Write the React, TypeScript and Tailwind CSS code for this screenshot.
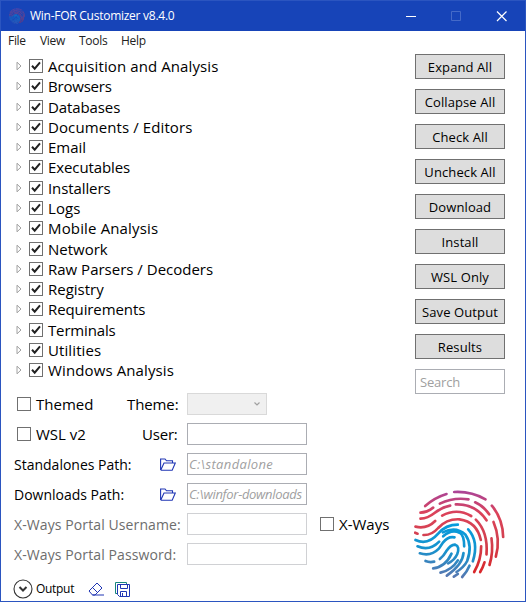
import React from "react";

const tree: [string, string][] = [
  ["Acquisition and Analysis", "tracking-[0.1px]"],
  ["Browsers", "tracking-[-0.2px]"],
  ["Databases", "tracking-[-0.1px]"],
  ["Documents / Editors", "tracking-[0.1px]"],
  ["Email", "tracking-[0px]"],
  ["Executables", "tracking-[-0.1px]"],
  ["Installers", "tracking-[-0.1px]"],
  ["Logs", "tracking-[0.1px]"],
  ["Mobile Analysis", "tracking-[0.150px]"],
  ["Network", "tracking-[0px]"],
  ["Raw Parsers / Decoders", "tracking-[0px]"],
  ["Registry", "tracking-[0px]"],
  ["Requirements", "tracking-[-0.1px]"],
  ["Terminals", "tracking-[-0.150px]"],
  ["Utilities", "tracking-[0.1px]"],
  ["Windows Analysis", "tracking-[0.120px]"],
];

const actions = ["Expand All", "Collapse All", "Check All", "Uncheck All", "Download", "Install", "WSL Only", "Save Output", "Results"];

const redRidges = [
  "M57 77Q85 52 121 41",
  "M144 35Q194 32 238 57",
  "M43 97Q62 97 81 82",
  "M101 70Q142 50 187 57",
  "M207 66Q232 77 249 102",
  "M257 76Q290 115 291 170",
  "M43 115Q65 114 85 98Q108 80 132 76",
  "M149 72Q208 70 241 120",
  "M262 125Q284 176 269 229",
  "M28 139Q62 147 87 122",
  "M108 106Q152 82 195 107",
  "M209 118Q246 155 241 222",
  "M52 164Q77 165 96 143Q122 115 160 117Q212 124 224 179",
  "M256 174Q262 215 250 254",
  "M27 157L34 160",
  "M225 198Q225 240 204 275",
  "M235 246Q230 262 222 275",
];
const blueRidges = [
  "M28 179Q65 196 96 160Q119 133 155 133",
  "M34 198Q70 214 99 184",
  "M111 168Q135 146 160 157Q174 164 174 198",
  "M41 219Q75 229 98 205L111 186Q126 167 145 171",
  "M101 236Q113 226 120 213Q134 192 147 193Q162 198 153 222Q145 240 126 249",
  "M110 156Q149 136 178 163Q200 195 183 242Q174 260 151 275",
  "M186 147Q219 183 200 243",
  "M58 242Q70 247 84 244",
  "M81 264Q118 260 136 220",
  "M103 277Q137 269 155 240",
  "M172 218Q170 252 122 286",
  "M143 289L155 281",
  "M190 256Q182 275 168 290",
];

function Fingerprint({ className, id }: { className: string; id: string }) {
  return (
    <svg viewBox="24 26 272 270" className={className} fill="none" strokeWidth="8" strokeLinecap="round">
      <defs>
        <linearGradient id={id + "r"} gradientUnits="userSpaceOnUse" x1="170" y1="30" x2="170" y2="280">
          <stop offset="0" stopColor="#a8449a" />
          <stop offset=".28" stopColor="#dc4258" />
          <stop offset=".6" stopColor="#d24150" />
          <stop offset="1" stopColor="#d92528" />
        </linearGradient>
        <linearGradient id={id + "b"} gradientUnits="userSpaceOnUse" x1="170" y1="135" x2="150" y2="292">
          <stop offset="0" stopColor="#079bdc" />
          <stop offset=".5" stopColor="#1593ce" />
          <stop offset="1" stopColor="#5877b0" />
        </linearGradient>
      </defs>
      <g stroke={`url(#${id}r)`}>{redRidges.map((d) => <path key={d} d={d} />)}</g>
      <g stroke={`url(#${id}b)`}>{blueRidges.map((d) => <path key={d} d={d} />)}</g>
    </svg>
  );
}

function Check({ checked }: { checked?: boolean }) {
  return (
    <span className="flex h-[14px] w-[14px] shrink-0 items-center justify-center border border-[#707070] bg-white">
      {checked && (
        <svg viewBox="0 0 12 12" className="h-3 w-3" fill="none" stroke="#212121" strokeWidth="2">
          <path d="M2 5.8L4.7 8.7L10 2.4" />
        </svg>
      )}
    </span>
  );
}

function Folder() {
  return (
    <svg viewBox="0 0 16 13" className="mr-[11px] h-[13px] w-4 shrink-0" fill="none" stroke="#2036b4" strokeWidth="1.1">
      <path d="M.6 12V1H5L6.5 2.8H12.5V5M.7 12.2H12.2L15.3 5H4L.7 12.2" />
    </svg>
  );
}

const box = "h-[22px] w-[120px] shrink-0 border px-px text-[13px] leading-[21px] italic text-[#a0a0a0] whitespace-nowrap";

export default function App() {
  return (
    <div className="flex h-[602px] w-[526px] flex-col border border-[#2b55c0] bg-white font-['Open_Sans','Noto_Sans',sans-serif] text-black">
      <header className="flex h-[30px] items-center bg-[#1744b8] text-white">
        <Fingerprint id="t" className="ml-2 h-4 w-4 opacity-70" />
        <span className="ml-[5px] text-[12px] tracking-[-0.260px]">Win-FOR Customizer v8.4.0</span>
        <svg viewBox="0 0 101 12" className="mr-[18px] ml-auto h-3 w-[101px]" fill="none" stroke="white">
          <path d="M0 6.5H10" />
          <path d="M45.5 1.5H54.5V10.5H45.5Z" stroke="#456ac8" />
          <path d="M91 1.5L100.5 11M100.5 1.5L91 11" strokeWidth="1.2" />
        </svg>
      </header>
      <nav className="flex h-5 items-center pl-[7px] text-[12px] tracking-[-0.3px] text-[#212121]">
        <span className="w-8">File</span>
        <span className="w-[39px]">View</span>
        <span className="w-[42px]">Tools</span>
        <span>Help</span>
      </nav>
      <main className="flex min-h-0 flex-1">
        <section className="flex flex-1 flex-col pt-[5px]">
          <ul>
            {tree.map(([name, spacing]) => (
              <li key={name} className="flex h-[20.270px] items-center pl-[15px]">
                <svg viewBox="0 0 6 10" className="mr-[7px] h-[10px] w-[6px]" fill="white" stroke="#a0a0a0">
                  <path d="M1 1.2V8.8L5 5Z" />
                </svg>
                <Check checked />
                <span className={"ml-[5px] text-[15px] leading-5 whitespace-nowrap " + spacing}>{name}</span>
              </li>
            ))}
          </ul>
          <div className="mt-[13px] flex flex-col gap-2 pl-[13px] text-[15px] whitespace-nowrap">
            <div className="flex h-[22px] items-center">
              <div className="flex w-[110px] items-center gap-[5px] pl-[3px]"><Check /><span>Themed</span></div>
              <span className="w-[63px] pl-[3px] tracking-[-0.1px]">Theme:</span>
              <span className="flex h-[22px] w-20 items-center justify-end border border-[#d9d9d9] bg-[#f0f0f0] pr-[5px]">
                <svg viewBox="0 0 8 5" className="h-[5px] w-2" fill="none" stroke="#a0a0a0" strokeWidth="1.2"><path d="M1.5 .5L4 3L6.5 .5" /></svg>
              </span>
            </div>
            <div className="flex h-[22px] items-center">
              <div className="flex w-[128px] items-center gap-[5px] pl-[3px]"><Check /><span>WSL v2</span></div>
              <span className="w-[45px] tracking-[-0.2px]">User:</span>
              <span className={box + " border-[#abadb3]"} />
            </div>
            <div className="flex h-[22px] items-center text-[14px]">
              <span className="w-[146px] flex-none">Standalones Path:</span><Folder />
              <span className={box + " border-[#abadb3] tracking-[0.350px]"}>C:\standalone</span>
            </div>
            <div className="flex h-[22px] items-center text-[14px]">
              <span className="w-[146px] flex-none">Downloads Path:</span><Folder />
              <span className={box + " border-[#abadb3] tracking-[-0.320px]"}>C:\winfor-downloads</span>
            </div>
            <div className="flex h-[22px] items-center text-[14px]">
              <span className="w-[173px] tracking-[0.1px] text-[#6d6d6d]">X-Ways Portal Username:</span>
              <span className={box + " border-[#d0d1d4]"} />
              <span className="ml-[13px] flex items-center gap-[5px] text-[15px]"><Check />X-Ways</span>
            </div>
            <div className="flex h-[22px] items-center text-[14px]">
              <span className="w-[173px] tracking-[0.1px] text-[#6d6d6d]">X-Ways Portal Password:</span>
              <span className={box + " border-[#d0d1d4]"} />
            </div>
          </div>
          <footer className="mt-[14px] flex h-5 items-center pl-3">
            <svg viewBox="0 0 20 20" className="h-5 w-5" fill="none" stroke="#333">
              <circle cx="10" cy="10" r="9" strokeWidth="1.1" />
              <path d="M6.5 8L10 11.5L13.5 8" strokeWidth="2" />
            </svg>
            <span className="ml-[3px] w-[52px] text-[12px] tracking-[-0.3px]">Output</span>
            <svg viewBox="0 0 16 14" className="h-[14px] w-4" fill="none" stroke="#2036b4">
              <path d="M1 9L9 1L14 6L7 13H4.5ZM4.5 5.5L9.5 10.5M4.5 13H16" />
            </svg>
            <svg viewBox="0 0 15 15" className="ml-[11px] h-[15px] w-[15px]" fill="none" stroke="#2036b4">
              <path d="M2.5 11.5H.5V.5H11.5V2.5" stroke="#16857c" />
              <path d="M2.5 2.5H14.5V14.5H4.5L2.5 12.5ZM5.5 2.5V6.5H12.5V2.5M5.5 14V9.5H11.5V14M7.5 11V14" />
            </svg>
          </footer>
        </section>
        <aside className="flex w-[110px] flex-col gap-[10px] pt-[3px]">
          {actions.map((a) => (
            <button key={a} className="h-[25px] w-[90px] border border-[#707070] bg-[#ddd] pt-px text-[13px] leading-[22px] tracking-[0.1px] whitespace-nowrap">{a}</button>
          ))}
          <div className="h-[25px] w-[90px] border border-[#abadb3] px-1 pt-px text-[13px] leading-[22px] tracking-[-0.2px] text-[#a0a0a0]">Search</div>
          <Fingerprint id="l" className="mt-auto mb-[22px] -ml-px h-[90px] w-[91px]" />
        </aside>
      </main>
    </div>
  );
}
